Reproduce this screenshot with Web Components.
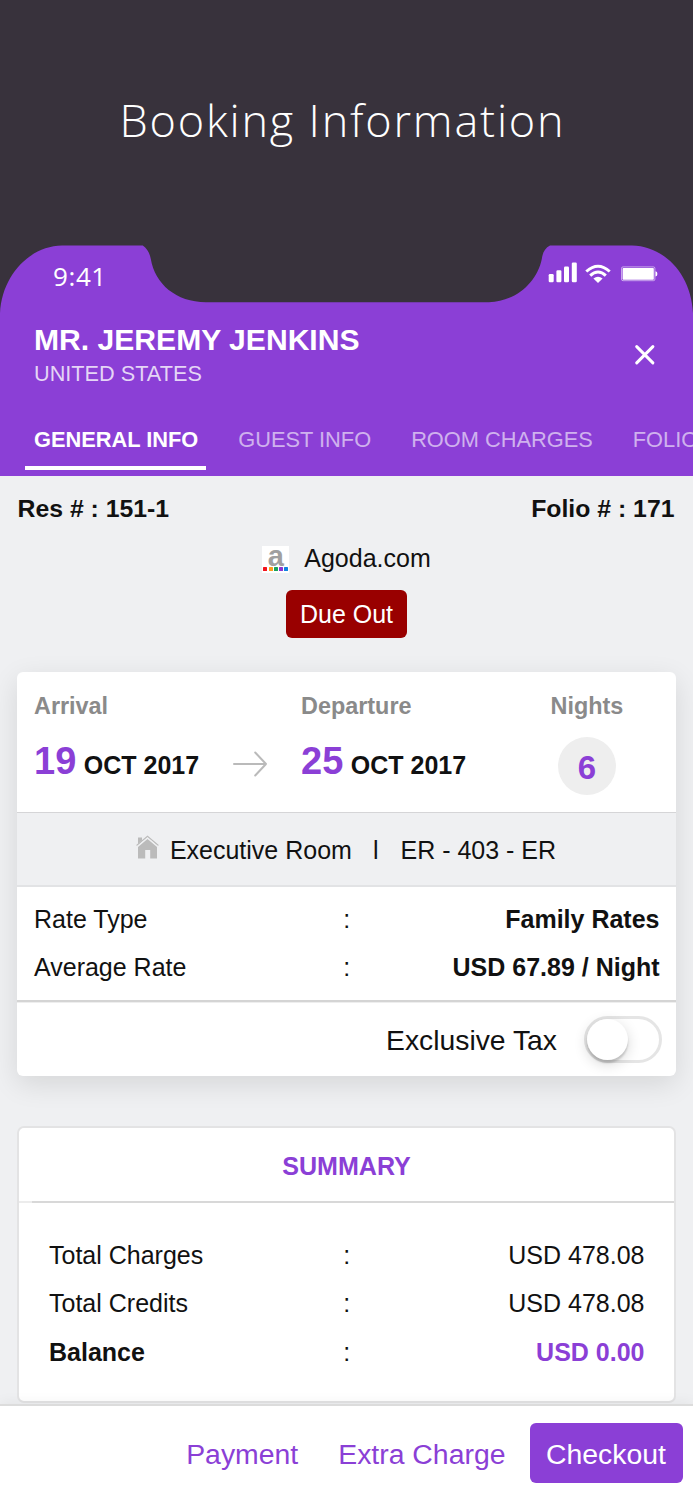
<!DOCTYPE html>
<html lang="en">
<head>
<meta charset="utf-8">
<title>Booking Information</title>
<style>
  html, body {
    margin: 0;
    padding: 0;
    height: 1500px;
    overflow: hidden;
  }
  body {
    width: 693px;
    background: #38323c;
    color: #111;
    font-family: "Liberation Sans", Arial, sans-serif;
    font-size: 25px;
    --purple: #8b3fd6;
  }
</style>
</head>
<body>
<booking-page>
  <screen-title>Booking Information</screen-title>
  <guest-header name="MR. JEREMY JENKINS" country="UNITED STATES">
    <nav-tab active>GENERAL INFO</nav-tab>
    <nav-tab>GUEST INFO</nav-tab>
    <nav-tab>ROOM CHARGES</nav-tab>
    <nav-tab>FOLIO</nav-tab>
  </guest-header>
  <booking-content>
    <res-line><span>Res # : 151-1</span><span>Folio # : 171</span></res-line>
    <booking-source>Agoda.com</booking-source>
    <status-badge>Due Out</status-badge>
    <stay-card>
      <stay-date slot="dates" label="Arrival" day="19">OCT 2017</stay-date>
      <stay-arrow slot="dates"></stay-arrow>
      <stay-date slot="dates" label="Departure" day="25">OCT 2017</stay-date>
      <night-count slot="dates" label="Nights">6</night-count>
      <room-line slot="room" room="ER - 403 - ER">Executive Room</room-line>
      <info-row slot="rates" label="Rate Type" strong>Family Rates</info-row>
      <info-row slot="rates" label="Average Rate" strong>USD 67.89 / Night</info-row>
      <span slot="tax">Exclusive Tax</span>
      <toggle-switch slot="tax"></toggle-switch>
    </stay-card>
    <summary-card heading="SUMMARY">
      <info-row label="Total Charges">USD 478.08</info-row>
      <info-row label="Total Credits">USD 478.08</info-row>
      <info-row label="Balance" total>USD 0.00</info-row>
    </summary-card>
  </booking-content>
  <action-bar>
    <action-button>Payment</action-button>
    <action-button>Extra Charge</action-button>
    <action-button primary>Checkout</action-button>
  </action-bar>
</booking-page>

<script>
// Base class: puts the markup of the element in its shadow root
class BaseElement extends HTMLElement {
  constructor() {
    super();
    const shadowRoot = this.attachShadow({ mode: 'open' });
    const template = document.createElement('template');
    template.innerHTML = this.render();
    shadowRoot.appendChild(template.content.cloneNode(true));
  }
}

class BookingPage extends BaseElement {
  render() {
    return `
      <style>
        :host {
          display: flex;
          flex-direction: column;
          width: 693px;
          height: 1500px;
          overflow: hidden;
        }
      </style>
      <slot></slot>
    `;
  }
}

class ScreenTitle extends BaseElement {
  render() {
    return `
      <style>
        :host {
          display: block;
          flex: none;
          box-sizing: border-box;
          height: 245px;
          padding: 90px 8px 0 0;
          text-align: center;
          font: 300 45px/60px "Open Sans", sans-serif;
          letter-spacing: 1.8px;
          color: #fff;
        }
      </style>
      <slot></slot>
    `;
  }
}

// Clock and phone icons, on each side of the notch
class StatusBar extends BaseElement {
  render() {
    return `
      <style>
        :host {
          display: grid;
          height: 78px;
        }
        .shape, .items { grid-area: 1 / 1; }
        .shape { display: block; }
        .items {
          display: flex;
          justify-content: space-between;
          align-items: flex-start;
          padding: 14px 35px 0 53px;
        }
        .time {
          margin-top: -1px;
          font: 400 26px/36px "Open Sans", sans-serif;
          letter-spacing: 0.6px;
          color: #fff;
        }
      </style>
      <svg class="shape" width="693" height="78" viewBox="0 245 693 78">
        <path fill="#8b3fd6" d="M0 323V313C2 275 30 246 62 245.6H142.8C147 248.500 149.700 253 150.800 259C155 284 176 302 206 302.200H489C517 301 537 282 541.800 259C542.500 253 545 248 550 245.600H632C665 246.500 691 274 693 313V323Z"/>
      </svg>
      <div class="items">
        <span class="time">9:41</span>
        <svg width="110" height="28" viewBox="548 259 110 28">
          <g fill="#fff">
            <rect x="548.700" y="274" width="5" height="8.300" rx="1.200"/>
            <rect x="556.400" y="270.300" width="5" height="12" rx="1.200"/>
            <rect x="564" y="266.600" width="5" height="15.700" rx="1.200"/>
            <rect x="571.800" y="262.600" width="5" height="19.700" rx="1.200"/>
            <path d="M593.400 278.600Q598 275 602.600 278.600L598 283Z"/>
            <rect x="622.600" y="267.900" width="31.200" height="11.800" rx=".8"/>
            <path d="M655.500 271.200q1.900.3 1.900 2.700t-1.900 2.700z"/>
          </g>
          <rect x="621.500" y="266.900" width="33.400" height="13.800" rx="1.500" fill="none" stroke="#fff" stroke-opacity=".6" stroke-width=".9"/>
          <g fill="none" stroke="#fff" stroke-width="3">
            <path d="M586.300 271.500Q598 261 609.700 271.500"/>
            <path d="M590.200 275.600Q598 268.400 605.800 275.600"/>
          </g>
        </svg>
      </div>
    `;
  }
}

class GuestHeader extends BaseElement {
  render() {
    return `
      <style>
        :host {
          display: block;
          flex: none;
          height: 231px;
          overflow: hidden;
          color: #fff;
        }
        .panel {
          height: 153px;
          background: var(--purple);
        }
        .guest {
          display: flex;
          justify-content: space-between;
          padding: 0 37px 0 34px;
          height: 103px;
        }
        h1 {
          margin: -1px 0 1px;
          font-size: 30.1px;
          line-height: 35px;
          font-weight: bold;
        }
        p {
          margin: 0;
          font-size: 21.7px;
          line-height: 31px;
          color: rgba(255, 255, 255, .78);
        }
        .close { margin-top: 21px; }
        .tabs {
          display: flex;
          gap: 23px;
          padding-left: 25px;
          white-space: nowrap;
        }
      </style>
      <status-bar></status-bar>
      <div class="panel">
        <div class="guest">
          <div>
            <h1>${this.getAttribute('name')}</h1>
            <p>${this.getAttribute('country')}</p>
          </div>
          <svg class="close" width="22" height="22" viewBox="0 0 22 22" stroke="#fff" stroke-width="3" stroke-linecap="round">
            <path d="M2.700 2.600L18.900 18.900M18.900 2.600L2.700 18.900"/>
          </svg>
        </div>
        <div class="tabs"><slot></slot></div>
      </div>
    `;
  }
}

class NavTab extends BaseElement {
  render() {
    return `
      <style>
        :host {
          display: block;
          flex: none;
          padding: 0 8px 12px 9px;
          border-bottom: 4px solid transparent;
          font-size: 21.8px;
          line-height: 28px;
          color: rgba(255, 255, 255, .6);
        }
        :host([active]) {
          border-color: #fff;
          color: #fff;
          font-weight: bold;
        }
      </style>
      <slot></slot>
    `;
  }
}

class BookingContent extends BaseElement {
  render() {
    return `
      <style>
        :host {
          display: flex;
          flex-direction: column;
          flex: none;
          height: 928px;
          box-sizing: border-box;
          padding: 15px 17px 0;
          background: #eff0f2;
        }
      </style>
      <slot></slot>
    `;
  }
}

class ResLine extends BaseElement {
  render() {
    return `
      <style>
        :host {
          display: flex;
          justify-content: space-between;
          padding: 0 1.5px 0 0.5px;
          font-size: 24.8px;
          line-height: 36px;
          font-weight: bold;
        }
      </style>
      <slot></slot>
    `;
  }
}

class BookingSource extends BaseElement {
  render() {
    return `
      <style>
        :host {
          display: flex;
          justify-content: center;
          align-items: center;
          gap: 15px;
          margin-top: 13px;
          line-height: 36px;
        }
        .logo {
          display: flex;
          flex-direction: column;
          align-items: center;
          justify-content: space-between;
          box-sizing: border-box;
          width: 27px;
          height: 27px;
          padding-bottom: 2px;
          margin-top: 3px;
          background: #fff;
        }
        .letter {
          font-size: 29px;
          line-height: 21px;
          height: 20px;
          font-weight: bold;
          color: #a0a0a0;
        }
        .dots { display: flex; gap: 1.2px; }
        .dots i { width: 4px; height: 4px; border-radius: 0.5px; }
      </style>
      <div class="logo">
        <span class="letter">a</span>
        <div class="dots">
          <i style="background:#f3131c"></i>
          <i style="background:#fb9d1c"></i>
          <i style="background:#17a35a"></i>
          <i style="background:#8a35d4"></i>
          <i style="background:#0f83e0"></i>
        </div>
      </div>
      <span><slot></slot></span>
    `;
  }
}

class StatusBadge extends BaseElement {
  render() {
    return `
      <style>
        :host {
          display: block;
          align-self: center;
          width: 121px;
          margin-top: 14px;
          line-height: 48px;
          text-align: center;
          border-radius: 6px;
          background: #990000;
          color: #fff;
        }
      </style>
      <slot></slot>
    `;
  }
}

class StayCard extends BaseElement {
  render() {
    return `
      <style>
        :host {
          display: block;
          margin-top: 34px;
          height: 404px;
          border-radius: 6px;
          background: #fff;
          box-shadow: 0 8px 28px rgba(0, 0, 0, .11);
        }
        .dates {
          display: grid;
          grid-template-columns: 198px 69px 227px auto;
          height: 120px;
          padding: 20px 0 0 17px;
          border-bottom: 1px solid #d5d5d7;
        }
        .room {
          height: 72px;
          background: #eff0f2;
          border-bottom: 2px solid #e2e3e5;
        }
        .rates {
          padding: 8px 16.5px 8px 17px;
          height: 97px;
          border-bottom: 2px solid #d4d4d4;
          --row-height: 48.4px;
        }
        .tax {
          display: flex;
          justify-content: flex-end;
          align-items: center;
          gap: 27px;
          height: 73px;
          padding-right: 14px;
          border-top: 1px solid #eee;
          font-size: 28.3px;
        }
        .tax ::slotted(span) { padding-top: 2px; }
      </style>
      <div class="dates"><slot name="dates"></slot></div>
      <div class="room"><slot name="room"></slot></div>
      <div class="rates"><slot name="rates"></slot></div>
      <div class="tax"><slot name="tax"></slot></div>
    `;
  }
}

class StayDate extends BaseElement {
  render() {
    return `
      <style>
        :host {
          display: block;
          font-weight: bold;
          white-space: nowrap;
        }
        .label {
          font-size: 23.4px;
          line-height: 28px;
          color: #8a8a8a;
        }
        .date {
          display: flex;
          align-items: baseline;
          gap: 7.5px;
          margin-top: 16px;
          line-height: 50px;
        }
        .day {
          font-size: 38px;
          color: var(--purple);
        }
      </style>
      <div class="label">${this.getAttribute('label')}</div>
      <div class="date">
        <span class="day">${this.getAttribute('day')}</span>
        <span><slot></slot></span>
      </div>
    `;
  }
}

class StayArrow extends BaseElement {
  render() {
    return `
      <style>
        :host {
          display: block;
          padding-top: 58px;
        }
      </style>
      <svg width="36" height="28" viewBox="0 0 36 28" fill="none" stroke="#bababa" stroke-width="2" stroke-linecap="round" stroke-linejoin="round">
        <path d="M2 14H34M23.200 2.500L34 14L23.200 25.500"/>
      </svg>
    `;
  }
}

class NightCount extends BaseElement {
  render() {
    return `
      <style>
        :host {
          display: flex;
          flex-direction: column;
          align-items: center;
          width: 118px;
          font-weight: bold;
        }
        .label {
          font-size: 23.4px;
          line-height: 28px;
          color: #8a8a8a;
        }
        .circle {
          width: 58px;
          height: 58px;
          margin-top: 17px;
          border-radius: 50%;
          background: #eee;
          font-size: 33px;
          line-height: 61px;
          text-align: center;
          color: var(--purple);
        }
      </style>
      <div class="label">${this.getAttribute('label')}</div>
      <div class="circle"><slot></slot></div>
    `;
  }
}

class RoomLine extends BaseElement {
  render() {
    return `
      <style>
        :host {
          display: flex;
          align-items: center;
          justify-content: center;
          height: 74px;
          white-space: nowrap;
        }
        svg { margin: -6px 11px 0 -1px; }
        .sep { margin: 0 22px 0 21px; }
      </style>
      <svg width="23" height="24" viewBox="0 0 23 24">
        <path fill="#bbb" d="M2 2.500H6V5.500L2 9ZM11.500 4L21 12V23.500H14.200V15H9.200V23.500H2V12Z"/>
        <path fill="none" stroke="#bbb" stroke-width="1.200" d="M.6 10.500L11.500 1.400L22.400 10.500"/>
        <path fill="none" stroke="#eff0f2" stroke-width="1" d="M1 11.600L11.500 2.900L22 11.600"/>
      </svg>
      <span><slot></slot></span>
      <span class="sep">l</span>
      <span>${this.getAttribute('room')}</span>
    `;
  }
}

class InfoRow extends BaseElement {
  render() {
    return `
      <style>
        :host {
          display: grid;
          grid-template-columns: 1fr auto 1fr;
          line-height: var(--row-height, 48px);
          white-space: nowrap;
        }
        .value { text-align: right; }
        :host([strong]) .value { font-weight: bold; }
        :host([total]) .label { font-weight: bold; }
        :host([total]) .value {
          font-weight: bold;
          color: var(--purple);
        }
      </style>
      <span class="label">${this.getAttribute('label')}</span>
      <span>:</span>
      <span class="value"><slot></slot></span>
    `;
  }
}

class ToggleSwitch extends BaseElement {
  render() {
    return `
      <style>
        :host {
          display: block;
          box-sizing: border-box;
          width: 78px;
          height: 47px;
          border: 3px solid #e5e5e5;
          border-radius: 24px;
          background: #fff;
        }
        .knob {
          width: 41px;
          height: 41px;
          border-radius: 50%;
          background: #fff;
          box-shadow: 0 3px 2px rgba(0, 0, 0, .16), 0 4px 14px rgba(0, 0, 0, .16);
        }
      </style>
      <div class="knob"></div>
    `;
  }
}

class SummaryCard extends BaseElement {
  render() {
    return `
      <style>
        :host {
          display: block;
          box-sizing: border-box;
          height: 277px;
          margin: 50px 0 0;
          border: 2px solid #e3e3e4;
          border-radius: 7px;
          background: #fff;
        }
        h2 {
          margin: 0;
          font-size: 25.1px;
          line-height: 77px;
          height: 73px;
          text-align: center;
          color: var(--purple);
        }
        .line {
          height: 2px;
          background: linear-gradient(to right, #ececec 13px, #d8d8d8 13px);
        }
        .rows {
          padding: 28px 29.5px 0 30px;
          --row-height: 48.4px;
        }
      </style>
      <h2>${this.getAttribute('heading')}</h2>
      <div class="line"></div>
      <div class="rows"><slot></slot></div>
    `;
  }
}

class ActionBar extends BaseElement {
  render() {
    return `
      <style>
        :host {
          display: flex;
          flex: none;
          justify-content: flex-end;
          align-items: center;
          box-sizing: border-box;
          height: 96px;
          padding: 0 10.5px 0 0;
          border-top: 2px solid #dcdcdc;
          background: #fff;
          box-shadow: 0 -2px 12px rgba(0, 0, 0, .05);
          z-index: 1;
        }
      </style>
      <slot></slot>
    `;
  }
}

class ActionButton extends BaseElement {
  render() {
    return `
      <style>
        :host {
          display: block;
          padding: 2px 0 0;
          margin-right: 40px;
          font-size: 28.4px;
          line-height: 58px;
          color: var(--purple);
        }
        :host([primary]) {
          width: 153px;
          margin: 0 0 0 -16px;
          border-radius: 6px;
          background: var(--purple);
          color: #fff;
          text-align: center;
        }
      </style>
      <slot></slot>
    `;
  }
}

customElements.define('booking-page', BookingPage);
customElements.define('screen-title', ScreenTitle);
customElements.define('status-bar', StatusBar);
customElements.define('guest-header', GuestHeader);
customElements.define('nav-tab', NavTab);
customElements.define('booking-content', BookingContent);
customElements.define('res-line', ResLine);
customElements.define('booking-source', BookingSource);
customElements.define('status-badge', StatusBadge);
customElements.define('stay-card', StayCard);
customElements.define('stay-date', StayDate);
customElements.define('stay-arrow', StayArrow);
customElements.define('night-count', NightCount);
customElements.define('room-line', RoomLine);
customElements.define('info-row', InfoRow);
customElements.define('toggle-switch', ToggleSwitch);
customElements.define('summary-card', SummaryCard);
customElements.define('action-bar', ActionBar);
customElements.define('action-button', ActionButton);
</script>
</body>
</html>
